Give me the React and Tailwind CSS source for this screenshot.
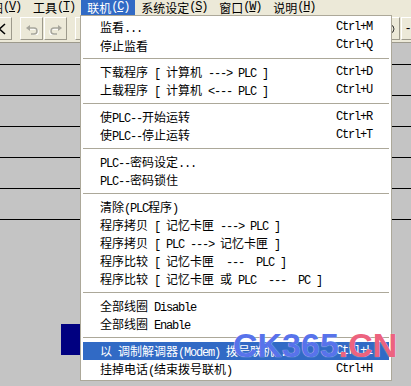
const CJK = "font-['Noto_Sans_CJK_SC',sans-serif] text-[12px]";
const LAT = "font-['Liberation_Mono','Noto_Sans_CJK_SC',monospace] text-[12px] tracking-[-1.2px]";

// split a label into latin / CJK runs so latin keeps a half-width pitch
function T({ text }) {
  const parts = text.match(/[\u0000-\u00ff]+|[^\u0000-\u00ff]+/g) || [];
  return parts.map((p, i) =>
    /[\u0000-\u00ff]/.test(p[0]) ? (
      <span key={i} className={LAT}>{p}</span>
    ) : (
      <span key={i} className={CJK}>{p}</span>
    )
  );
}

const menu = [
  ["监看...", "Ctrl+M"],
  ["停止监看", "Ctrl+Q"],
  "-",
  ["下载程序 [ 计算机 ---> PLC ]", "Ctrl+D"],
  ["上载程序 [ 计算机 <--- PLC ]", "Ctrl+U"],
  "-",
  ["使PLC--开始运转", "Ctrl+R"],
  ["使PLC--停止运转", "Ctrl+T"],
  "-",
  ["PLC--密码设定..."],
  ["PLC--密码锁住"],
  "-",
  ["清除(PLC程序)"],
  ["程序拷贝 [ 记忆卡匣 ---> PLC ]"],
  ["程序拷贝 [ PLC ---> 记忆卡匣 ]"],
  ["程序比较 [ 记忆卡匣  ---  PLC ]"],
  ["程序比较 [ 记忆卡匣 或 PLC  ---  PC ]"],
  "-",
  ["全部线圈 Disable"],
  ["全部线圈 Enable"],
  "-",
  ["以 调制解调器(Modem) 拨号联机...", "Ctrl+L", true],
  ["挂掉电话(结束拨号联机)", "Ctrl+H"],
];

function BarItem({ label, k, active, className = "" }) {
  return (
    <div
      className={`flex h-[15px] items-center px-[6px] leading-[15px] ${
        active ? "bg-[#316ac5] text-white" : "text-black"
      } ${className}`}
    >
      <span className={CJK}>{label}</span>
      <span className={LAT}>
        (<span className="underline">{k}</span>)
      </span>
    </div>
  );
}

function Btn({ children, className = "" }) {
  return (
    <div
      className={`flex h-[23px] w-[23px] shrink-0 items-center justify-center border border-t-white border-l-white border-b-[#9d9a8c] border-r-[#9d9a8c] bg-[#ece9d8] ${className}`}
    >
      {children}
    </div>
  );
}

function Undo({ flip }) {
  return (
    <svg width="14" height="12" viewBox="0 0 14 12" className={flip ? "-scale-x-100" : ""}>
      <g fill="none" strokeWidth="1.5">
        <path d="M4 5h5a3 3 0 0 1 0 6H6" stroke="#ffffff" transform="translate(1 1)" />
        <path d="M4 5h5a3 3 0 0 1 0 6H6" stroke="#a7a69c" />
      </g>
      <path d="M1 5l4-3v6z" fill="#a7a69c" />
    </svg>
  );
}

export default function App() {
  return (
    <div className="relative flex h-[386px] w-[411px] flex-col overflow-hidden bg-[#c4c4c4]">
      {/* menu bar */}
      <div className="flex h-[15px] shrink-0 whitespace-nowrap bg-[#ece9d8]">
        <BarItem label="视图" k="V" className="-ml-[27px]" />
        <BarItem label="工具" k="T" />
        <BarItem label="联机" k="C" active />
        <BarItem label="系统设定" k="S" />
        <BarItem label="窗口" k="W" />
        <BarItem label="说明" k="H" />
      </div>

      {/* toolbar */}
      <div className="flex h-[28px] shrink-0 items-start border-b border-[#9d9a8c] bg-[#ece9d8] pt-[2px]">
        <Btn className="-ml-[12px] w-[24px] justify-end pr-[5px]">
          <svg width="8" height="12" viewBox="0 0 8 12">
            <path d="M7 1L1.5 6L7 11" fill="none" stroke="#000" strokeWidth="1.5" />
          </svg>
        </Btn>
        <div className="w-[8px] shrink-0" />
        <Btn>
          <Undo />
        </Btn>
        <Btn className="ml-px">
          <Undo flip />
        </Btn>
        <div className="w-[8px] shrink-0" />
        <Btn />
        <div className="w-[279px] shrink-0" />
        <Btn>
          <svg width="14" height="14" viewBox="0 0 14 14">
            <path d="M2 3h6a4 4 0 0 1 0 8H2" fill="none" stroke="#333" />
            <path d="M3 12h8" stroke="#4a6ee0" strokeDasharray="1 1" />
          </svg>
        </Btn>
        <Btn className="ml-px">
          <span className={`${LAT} -ml-[10px] text-black`}>-</span>
        </Btn>
      </div>

      {/* ladder workspace */}
      <div className="flex flex-col">
        <div className="h-[22px] border-b border-black" />
        <div className="h-[31px] border-b border-black" />
        <div className="h-[31px] border-b border-black" />
        <div className="h-[31px] border-b border-black" />
        <div className="h-[31px] border-b border-black" />
        <div className="h-[31px] border-b border-black" />
        <div className="ml-[61px] mt-[104px] h-[31px] w-[40px] bg-[#000080]" />
      </div>

      {/* dropdown */}
      <div className="absolute left-[80px] top-[15px] flex h-[366px] w-[312px] flex-col border border-[#aca899] bg-white p-[2px]">
        {menu.map((m, i) =>
          m === "-" ? (
            <div key={i} className="flex h-[9px] shrink-0 items-center">
              <div className="h-px w-full bg-[#aca899]" />
            </div>
          ) : (
            <div
              key={i}
              className={`flex h-[18px] shrink-0 items-center justify-between whitespace-pre pl-[17px] pr-[17px] leading-[18px] ${
                m[2] ? "bg-[#316ac5] text-white" : "text-black"
              }`}
            >
              <span>
                <T text={m[0]} />
              </span>
              {m[1] && (
                <span className={LAT}>{m[1]}</span>
              )}
            </div>
          )
        )}
      </div>

      {/* watermark */}
      <div className="pointer-events-none absolute left-[233px] top-[328px] whitespace-nowrap font-['Liberation_Sans',sans-serif] text-[34px] font-bold leading-[34px] [text-shadow:0_0_1px_#ffffff]">
        <span className="text-[#3a5ae8]/85">CK365</span>
        <span className="text-[#e8385c]/80">.CN</span>
      </div>
    </div>
  );
}
